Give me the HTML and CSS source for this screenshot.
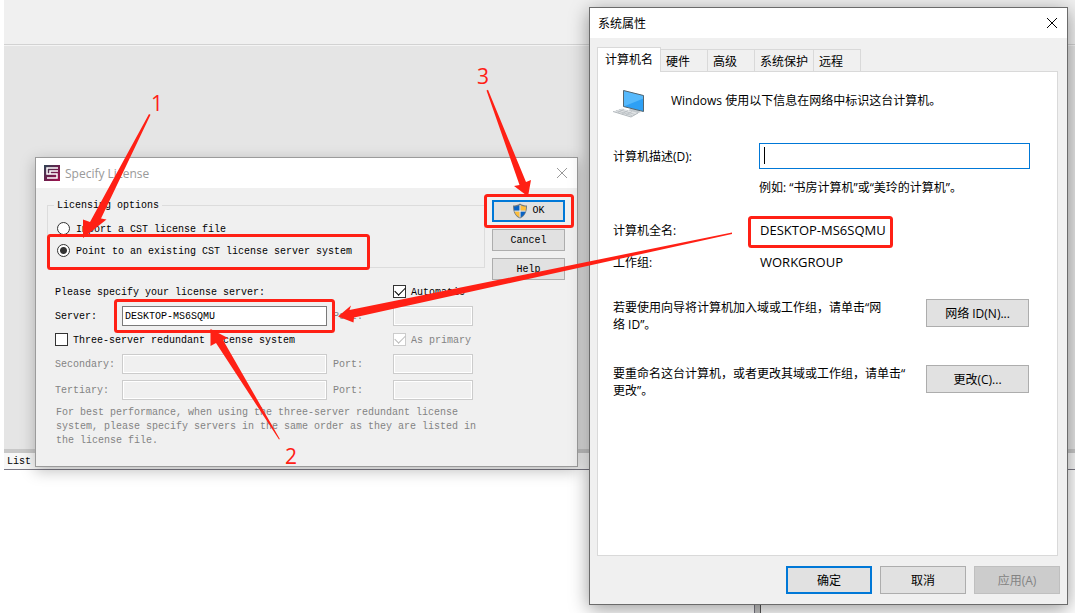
FILE: index.html
```html
<!DOCTYPE html>
<html lang="zh-CN">
<head>
    <meta charset="UTF-8">
    <meta name="viewport" content="width=device-width, initial-scale=1.0">
    <title>Specify License</title>
    <link rel="stylesheet" href="styles.css">
</head>
<body>
    <div class="desktop">
        <!-- main window behind the dialogs -->
        <div class="toolbar"></div>
        <div class="workspace"></div>
        <div class="list-header">List</div>
        <div class="list-pane">
            <div class="splitter"></div>
        </div>

        <section class="window license">
            <header class="titlebar">
                <svg class="app-icon" width="16" height="16" viewBox="0 0 16 16">
                    <defs>
                        <linearGradient id="cst" x1="0" y1="0" x2="1" y2="1">
                            <stop offset="0" stop-color="#2d4654"/>
                            <stop offset="0.5" stop-color="#6b1f4c"/>
                            <stop offset="1" stop-color="#a3124f"/>
                        </linearGradient>
                    </defs>
                    <rect width="16" height="16" fill="url(#cst)"/>
                    <path d="M14 3H3v6h3M14 6H6v3h7v4H3" fill="none" stroke="#fff" stroke-width="1.5"/>
                </svg>
                <h2>Specify License</h2>
                <button class="close" aria-label="Close">
                    <svg width="12" height="12" viewBox="0 0 12 12"><path d="M1 1l10 10M11 1L1 11"/></svg>
                </button>
            </header>
            <form class="license-body">
                <div class="license-top">
                    <fieldset>
                        <legend>Licensing options</legend>
                        <label class="option"><input type="radio" name="source">Import a CST license file</label>
                        <label class="option"><input type="radio" name="source" checked>Point to an existing CST license server system</label>
                    </fieldset>
                    <div class="license-buttons">
                        <button type="button" class="default">
                            <svg width="16" height="16" viewBox="0 0 16 16">
                                <path d="M8 .5C6 2 3.500 2.600 1 2.600c0 6 1.500 10.400 7 13 5.500-2.600 7-7 7-13C12.500 2.600 10 2 8 .5z" fill="#6f7a80"/>
                                <path d="M7.600 2C6 3 4 3.500 2 3.600c0 1.600.1 2.900.4 4.100h5.200z" fill="#0a63c4"/>
                                <path d="M8.400 2c1.600 1 3.600 1.500 5.600 1.600 0 1.600-.1 2.900-.4 4.100H8.400z" fill="#fdbe3b"/>
                                <path d="M2.600 8.500c.8 2.700 2.300 4.600 5 6V8.500z" fill="#fdbe3b"/>
                                <path d="M13.400 8.500c-.8 2.700-2.300 4.600-5 6V8.500z" fill="#0a63c4"/>
                                <path d="M8 2v12.500M2.400 8.100h11.200" stroke="#fff" stroke-width=".9"/>
                            </svg>
                            OK
                        </button>
                        <button type="button">Cancel</button>
                        <button type="button">Help</button>
                    </div>
                </div>

                <div class="servers">
                    <span class="text wide">Please specify your license server:</span>
                    <label class="check"><input type="checkbox" checked>Automatic</label>

                    <label class="text" for="server">Server:</label>
                    <input type="text" id="server" value="DESKTOP-MS6SQMU">
                    <label class="text port off" for="port1">Port:</label>
                    <input type="text" id="port1" disabled>

                    <label class="check wide"><input type="checkbox">Three-server redundant license system</label>
                    <label class="check off"><input type="checkbox" checked disabled>As primary</label>

                    <label class="text off" for="secondary">Secondary:</label>
                    <input type="text" id="secondary" disabled>
                    <label class="text port off" for="port2">Port:</label>
                    <input type="text" id="port2" disabled>

                    <label class="text off" for="tertiary">Tertiary:</label>
                    <input type="text" id="tertiary" disabled>
                    <label class="text port off" for="port3">Port:</label>
                    <input type="text" id="port3" disabled>
                </div>
                <p class="note">For best performance, when using the three-server redundant license<br>system, please specify servers in the same order as they are listed in<br>the license file.</p>
            </form>
        </section>

        <section class="window system">
            <header class="titlebar">
                <h2>系统属性</h2>
                <button class="close" aria-label="关闭">
                    <svg width="12" height="12" viewBox="0 0 12 12"><path d="M1 1l10 10M11 1L1 11"/></svg>
                </button>
            </header>
            <nav class="tabs">
                <button class="active">计算机名</button>
                <button>硬件</button>
                <button>高级</button>
                <button>系统保护</button>
                <button>远程</button>
            </nav>
            <div class="pane">
                <div class="intro">
                    <svg width="34" height="30" viewBox="0 0 34 30">
                        <path d="M19 18l6 3 3 2-5 2-8-3z" fill="#c3c9cd"/>
                        <path d="M10.500 1.500l20 5v16l-20-5z" fill="#2ea0f5"/>
                        <path d="M10.500 1.500l20 5v3l-20 8z" fill="#56b9fc"/>
                        <path d="M10.500 1.500l20 5v16l-20-5z" fill="none" stroke="#56666f"/>
                        <path d="M0 22.500l9-3 16 4.500-7 4z" fill="#e0e3e5"/>
                        <path d="M0 22.500l18 5.500 7-4" fill="none" stroke="#b3b9bd"/>
                        <path d="M3 21.500l16 5M6 20.500l16 5M9 25l6-3.500M13 26l6-3.500M5 23.500l6-3.500" stroke="#b3b9bd" stroke-width=".7"/>
                    </svg>
                    <p>Windows 使用以下信息在网络中标识这台计算机。</p>
                </div>
                <div class="row description">
                    <label for="description">计算机描述(D):</label>
                    <input type="text" id="description">
                </div>
                <p class="example">例如: “书房计算机”或“美玲的计算机”。</p>
                <dl>
                    <div class="row"><dt>计算机全名:</dt><dd>DESKTOP-MS6SQMU</dd></div>
                    <div class="row"><dt>工作组:</dt><dd>WORKGROUP</dd></div>
                </dl>
                <div class="action">
                    <p>若要使用向导将计算机加入域或工作组，请单击“网<br>络 ID”。</p>
                    <button>网络 ID(N)...</button>
                </div>
                <div class="action">
                    <p>要重命名这台计算机，或者更改其域或工作组，请单击“<br>更改”。</p>
                    <button>更改(C)...</button>
                </div>
            </div>
            <footer>
                <button class="default">确定</button>
                <button>取消</button>
                <button disabled>应用(A)</button>
            </footer>
        </section>

        <!-- step markers drawn over both dialogs -->
        <svg class="marks" width="1075" height="613" viewBox="0 0 1075 613">
            <g class="frames">
                <rect x="48.500" y="235.500" width="320" height="33" rx="2"/>
                <rect x="115.500" y="300.500" width="218" height="31" rx="2"/>
                <rect x="485.500" y="195.500" width="87" height="31" rx="2"/>
                <rect x="749.500" y="217.500" width="142" height="29" rx="2"/>
            </g>
            <g class="arrows">
                <path d="M149 114l1.500.7L101 218.500l5.500 1L83 238v-18.500l7 2.500z"/>
                <path d="M279 439.500l.8-.5L223 340l5-2-17.500-9v17l5.500-3z"/>
                <path d="M486.500 90.500l1.500-.7L526 182l5-2-3 16.500L514 186l5.500-1z"/>
                <path d="M732 232.500v1.500L354 317.500l-.5 5L338 316.500l13-11-1.500 4.500z"/>
            </g>
            <text x="151" y="111">1</text>
            <text x="285" y="464">2</text>
            <text x="477" y="84">3</text>
        </svg>
    </div>
</body>
</html>
```
FILE: styles.css
```css
* {
    box-sizing: border-box;
    margin: 0;
    padding: 0;
}
body {
    font-family: "Open Sans", "Noto Sans CJK SC", sans-serif;
    font-size: 12px;
    color: #000;
    background-color: #fff;
}
button, input {
    font: inherit;
    color: inherit;
}
.desktop {
    position: relative;
    display: flex;
    flex-direction: column;
    min-height: 100vh;
    padding-left: 4px;
    overflow: hidden;
}
.toolbar {
    height: 45px;
    background-color: #f0f0f0;
    border-bottom: 1px solid #d2d2d2;
}
.workspace {
    flex: 1;
    background-color: #e5e5e5;
    border-top: 1px solid #f4f4f4;
    border-bottom: 4px solid #c8c8c8;
}
.list-header {
    height: 17px;
    padding-left: 3px;
    font: 10px/18px "Liberation Mono", monospace;
    background-color: #f7f7f7;
    border-bottom: 1px solid #7a7884;
}
.list-pane {
    display: flex;
    height: 143px;
    padding-left: 750px;
}
.splitter {
    width: 7px;
    background-color: #c8c8c8;
    border-left: 1px solid #7a7884;
    border-right: 1px solid #555;
}

/* windows */
.window {
    position: absolute;
    display: flex;
    flex-direction: column;
    background-color: #f0f0f0;
}
.titlebar {
    display: flex;
    align-items: center;
    height: 30px;
    padding: 0 9px 0 8px;
    background-color: #fff;
}
.titlebar h2 {
    flex: 1;
    font-size: 12px;
    font-weight: normal;
}
.close {
    display: flex;
    border: none;
    background: none;
}
.close path {
    stroke: currentColor;
    stroke-width: 1;
}
.window button:not(.close) {
    background-color: #e1e1e1;
    border: 1px solid #adadad;
}
.window button.default {
    border: 2px solid #0078d7;
}

/* license dialog */
.license {
    left: 35px;
    top: 157px;
    width: 543px;
    min-height: 310px;
    border: 1px solid #9b9b9b;
    box-shadow: 0 4px 14px rgba(0, 0, 0, 0.25);
}
.license .titlebar {
    color: #999;
}
.app-icon {
    margin-right: 5px;
}
.license-body {
    padding: 10px 12px 10px 11px;
    font: 10px/14px "Liberation Mono", monospace;
}
.license-top {
    display: flex;
    gap: 7px;
    height: 82px;
}
fieldset {
    flex: 1;
    height: 70px;
    padding: 5px 8px 6px 9px;
    border: 1px solid #dcdcdc;
}
legend {
    padding: 2px 3px 0;
    margin-left: -3px;
    line-height: 12px;
}
.option {
    display: flex;
    align-items: center;
    height: 22px;
    padding-top: 3px;
}
input[type="radio"], input[type="checkbox"] {
    appearance: none;
    flex: none;
    width: 13px;
    height: 13px;
    border: 1px solid #333;
    background-color: #fff;
}
input[type="radio"] {
    margin: 0 6px 3px 0;
    border-radius: 50%;
}
input[type="radio"]:checked {
    background: radial-gradient(circle, #333 3px, #fff 4px);
}
input[type="checkbox"] {
    margin: 0 5px 4px 0;
}
input[type="checkbox"]:checked::after {
    content: "";
    display: block;
    width: 9px;
    height: 5px;
    margin: 2px 1px;
    border-left: 1px solid;
    border-bottom: 1px solid;
    transform: translateY(-1px) rotate(-45deg);
}
input[type="checkbox"]:disabled {
    color: #bbb;
    border-color: #ccc;
}
.license-buttons {
    display: flex;
    flex-direction: column;
    gap: 7px;
    width: 73px;
    padding-top: 2px;
}
.license-buttons button {
    display: flex;
    align-items: center;
    justify-content: center;
    gap: 4px;
    height: 22px;
    padding-top: 2px;
}
.license-buttons .default {
    padding-top: 0;
}
.servers {
    display: grid;
    grid-template-columns: 67px 205px 66px 80px;
    grid-template-rows: repeat(4, 24px) 28px;
    align-items: center;
    padding-left: 8px;
}
.wide {
    grid-column: span 3;
}
.text {
    padding-top: 2px;
}
.check {
    display: flex;
    align-items: center;
    padding-top: 2px;
}
.port {
    padding-left: 6px;
}
.off {
    color: #838383;
}
.servers input[type="text"] {
    width: 100%;
    height: 20px;
    padding: 0 2px;
    border: 1px solid #7a7a7a;
    background-color: #fff;
}
.servers input[type="text"]:disabled {
    border-color: #ccc;
    background-color: #f0f0f0;
    box-shadow: inset 0 0 0 1px #fff;
}
.note {
    padding: 2px 0 0 9px;
    color: #838383;
}

/* system properties dialog */
.system {
    left: 589px;
    top: 7px;
    width: 479px;
    min-height: 598px;
    border: 1px solid #6b6b6b;
    box-shadow: 0 4px 18px rgba(0, 0, 0, 0.4);
}
.tabs {
    display: flex;
    align-items: flex-end;
    height: 34px;
    padding: 0 7px;
}
.window .tabs button {
    height: 23px;
    padding: 0 5px;
    margin-right: -1px;
    background-color: #f0f0f0;
    border-color: #d9d9d9;
    min-width: 48px;
    text-align: left;
}
.window .tabs .active {
    position: relative;
    z-index: 1;
    height: 25px;
    padding: 0 7px 2px;
    background-color: #fff;
    border-bottom: none;
}
.pane {
    flex: 1;
    margin: -1px 9px 0 7px;
    padding: 17px 27px 0 15px;
    background-color: #fff;
    border: 1px solid #d9d9d9;
    line-height: 17px;
}
.intro {
    display: flex;
    gap: 24px;
    height: 54px;
}
.intro p {
    padding-top: 3px;
}
.row {
    display: flex;
    align-items: center;
    height: 32px;
}
.row label, .row dt {
    width: 147px;
}
.row dd {
    font-size: 13px;
}
.description {
    height: 26px;
}
.description label {
    width: 146px;
}
/* the 1px gradient strip is the text caret */
.description input {
    flex: 1;
    height: 26px;
    padding: 0 3px;
    border: 1px solid #0078d7;
    background: linear-gradient(#000, #000) 4px 3px / 1px 17px no-repeat #fff;
    outline: none;
}
.example {
    padding: 10px 0 18px 146px;
}
.pane dl {
    margin-bottom: 21px;
}
.action {
    display: flex;
    justify-content: space-between;
    height: 66px;
    padding-right: 1px;
}
.action button {
    width: 103px;
    height: 28px;
}
footer {
    display: flex;
    justify-content: flex-end;
    gap: 8px;
    padding: 10px 7px;
}
footer button {
    width: 86px;
    height: 28px;
}
.window footer button:disabled {
    color: #838383;
    background-color: #ccc;
    border-color: #bfbfbf;
}

/* red step markers */
.marks {
    position: absolute;
    left: 0;
    top: 0;
    pointer-events: none;
}
.frames rect {
    fill: none;
    stroke: #ff2015;
    stroke-width: 3;
}
.arrows path, .marks text {
    fill: #ff2015;
}
.marks text {
    font-size: 21px;
}
```
